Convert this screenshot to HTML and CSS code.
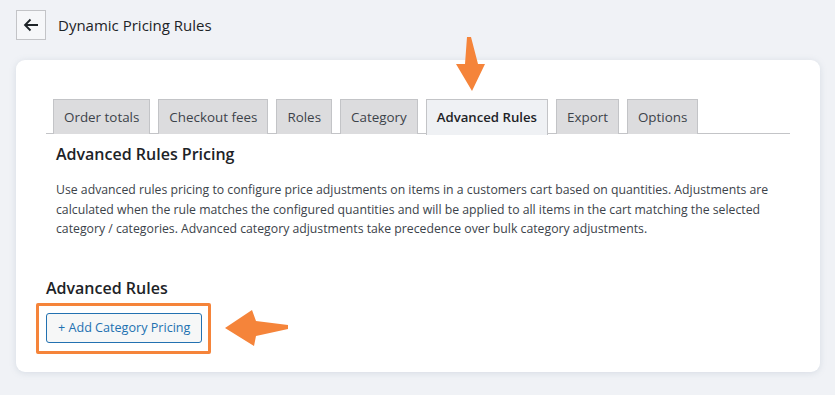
FILE: index.html
```html
<!DOCTYPE html>
<html lang="en">
<head>
    <meta charset="UTF-8">
    <meta name="viewport" content="width=device-width, initial-scale=1.0">
    <title>Dynamic Pricing Rules</title>
    <link rel="stylesheet" href="styles.css">
</head>
<body>
    <div class="topbar">
        <button class="back" aria-label="Back">
            <svg width="16" height="14" viewBox="0 0 16 14"><path d="M15 7H2M7.5 1.5 2 7l5.5 5.5" fill="none" stroke="#1d2327" stroke-width="1.8"/></svg>
        </button>
        <h1 class="title">Dynamic Pricing Rules</h1>
    </div>

    <div class="card">
        <nav class="tabs">
            <a class="tab">Order totals</a>
            <a class="tab">Checkout fees</a>
            <a class="tab">Roles</a>
            <a class="tab">Category</a>
            <a class="tab active">Advanced Rules</a>
            <a class="tab">Export</a>
            <a class="tab">Options</a>
        </nav>

        <div class="intro">
            <h2>Advanced Rules Pricing</h2>
            <p>Use advanced rules pricing to configure price adjustments on items in a customers cart based on quantities. Adjustments are<br>
            calculated when the rule matches the configured quantities and will be applied to all items in the cart matching the selected<br>
            category / categories. Advanced category adjustments take precedence over bulk category adjustments.</p>
        </div>

        <h3 class="rules-title">Advanced Rules</h3>
        <div class="add-row">
            <div class="highlight">
                <button class="add-btn">+ Add Category Pricing</button>
            </div>
            <svg class="arrow-left" width="64" height="38" viewBox="0 0 64 38">
                <path d="M0 18 L27 0 L31 11 L63 15 L63 19 L31 26 L29 36 Z" fill="#f5843a"/>
            </svg>
        </div>
    </div>

    <!-- annotation arrow over the tab bar -->
    <svg class="arrow-down" width="32" height="56" viewBox="0 0 32 56">
        <path d="M11 0 L15 0 L22 27 L29 27 L16 54 L0 27 L9 27 Z" fill="#f5843a"/>
    </svg>
</body>
</html>
```

FILE: styles.css
```css
*{
    box-sizing: border-box;
}

body{
    margin: 0;
    background: #f0f2f6;
    font-family: "Open Sans", Arial, sans-serif;
    color: #1d2327;
    position: relative;
    height: 395px;
    overflow: hidden;
}

.topbar{
    display: flex;
    align-items: center;
    gap: 12px;
    padding: 10px 16px 0 16px;
    height: 39px;
}

.back{
    width: 30px;
    height: 30px;
    border: 1px solid #c3c4c7;
    background: #f6f7f9;
    display: flex;
    align-items: center;
    justify-content: center;
    padding: 0;
}

.title{
    margin: 0;
    font-size: 15px;
    font-weight: 400;
    color: #1d2327;
}

.card{
    margin: 21px 15px 0 16px;
    height: 312px;
    background: #fff;
    border-radius: 9px;
    box-shadow: 0 1px 6px rgba(140, 155, 175, 0.25);
    padding: 39px 30px 0 30px;
}

.tabs{
    display: flex;
    gap: 8px;
    padding-left: 7px;
    border-bottom: 1px solid #c3c4c7;
    height: 35px;
}

.tab{
    height: 35px;
    padding: 5px 10px;
    border: 1px solid #c3c4c7;
    border-bottom: none;
    background: #dcdcde;
    color: #3c434a;
    font-size: 13.4px;
    font-weight: 500;
    line-height: 24px;
    white-space: nowrap;
}

.tab.active{
    background: #eff1f4;
    color: #1d2327;
    font-weight: 600;
    font-size: 13.2px;
    height: 36px;
}

.intro{
    padding-left: 10px;
}

.intro h2{
    margin: 8px 0 0 0;
    font-size: 16px;
    font-weight: 600;
    line-height: 24px;
    color: #1d2327;
}

.intro p{
    margin: 14px 0 0 0;
    font-size: 12.25px;
    line-height: 19.5px;
    color: #3c434a;
    white-space: nowrap;
}

.rules-title{
    margin: 37px 0 0 0;
    font-size: 16px;
    font-weight: 600;
    line-height: 24px;
    color: #1d2327;
}

.add-row{
    display: flex;
    align-items: center;
    gap: 14px;
    margin-top: 3px;
    margin-left: -10px;
}

.highlight{
    border: 3px solid #f5843a;
    border-radius: 2px;
    padding: 7px 6px 8px 7px;
}

.add-btn{
    display: block;
    height: 30px;
    padding: 0 11px;
    border: 1px solid #2271b1;
    border-radius: 3px;
    background: #f6f7f7;
    color: #2271b1;
    font-family: "Open Sans", Arial, sans-serif;
    font-size: 12.6px;
}

.arrow-left{
    margin-top: 2px;
}

.arrow-down{
    position: absolute;
    left: 456px;
    top: 37px;
}
```
